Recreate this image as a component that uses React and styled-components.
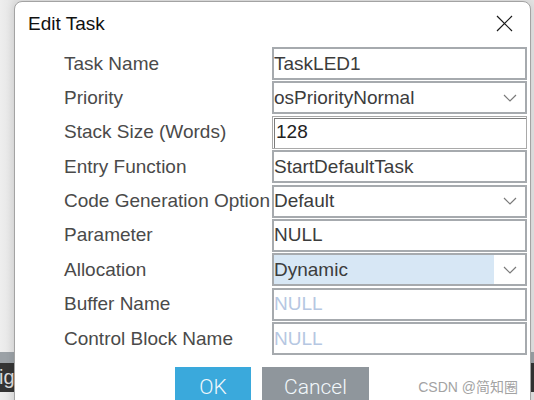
import React from 'react'
import styled, { createGlobalStyle } from 'styled-components'

const Global = createGlobalStyle`
  html, body {
    margin: 0;
    padding: 0;
    overflow: hidden;
    background: #e8e8e8;
  }
`

const Desktop = styled.div`
  position: relative;
  width: 534px;
  height: 400px;
  overflow: hidden;
  display: flex;
  flex-direction: column;
  background: linear-gradient(90deg, #eeeeee 0px, #e4e4e4 14px);
`

const Spacer = styled.div`
  height: 352px;
`

const GreyBand = styled.div`
  height: 11px;
  background: #9ba1a6;
`

const DarkBand = styled.div`
  height: 29px;
  background: #343434;
  color: #dcdcdc;
  font: 20px 'Liberation Sans', Arial, sans-serif;
  line-height: 29px;
  text-indent: -1px;
`

const Dialog = styled.div`
  position: absolute;
  left: 14px;
  top: 1px;
  width: 517px;
  height: 420px;
  box-sizing: border-box;
  background: #fff;
  border: 1px solid #a3a3a3;
  border-radius: 8px 8px 0 0;
  box-shadow: 0 0 10px rgba(0, 0, 0, 0.12);
  display: flex;
  flex-direction: column;
`

const TitleBar = styled.div`
  height: 43px;
  display: flex;
  align-items: center;
  justify-content: space-between;
  padding: 0 17px 0 13px;
`

const Title = styled.span`
  font: 19px 'Liberation Sans', Arial, sans-serif;
  color: #111;
`

const Close = styled.button`
  border: 0;
  background: none;
  padding: 0;
  width: 18px;
  height: 18px;
  display: flex;
  align-items: center;
  justify-content: center;
`

const Form = styled.div`
  display: grid;
  grid-template-columns: 208px 255px;
  grid-auto-rows: 34.4px;
  padding: 2px 0 0 49px;
`

const Label = styled.div`
  font: 19px 'Liberation Sans', Arial, sans-serif;
  color: #4a4a4a;
  display: flex;
  align-items: center;
  white-space: nowrap;
  height: 33px;
`

const Field = styled.div`
  height: 33px;
  box-sizing: border-box;
  border: ${p => (p.$focused ? '1px solid #a9a9a9' : '2px solid #a6aaae')};
  box-shadow: ${p => (p.$focused ? 'inset 1px 1px 0 #fff, inset 2px 2px 0 #7b7b7b' : 'none')};
  background: #fff;
  display: flex;
  align-items: center;
  font: 19px 'Liberation Sans', Arial, sans-serif;
  color: ${p => (p.$placeholder ? '#b6c7e2' : p.$focused ? '#222' : '#3c3c3c')};
  padding-left: ${p => (p.$focused ? '3px' : '0')};
  overflow: hidden;
  white-space: nowrap;
`

const Value = styled.span`
  flex: 1;
  align-self: stretch;
  display: flex;
  align-items: center;
  background: ${p => (p.$selected ? '#d7e7f5' : 'transparent')};
`

const ChevronCell = styled.span`
  width: 31px;
  align-self: stretch;
  display: flex;
  align-items: center;
  justify-content: center;
  background: #fff;
`

const Buttons = styled.div`
  display: flex;
  align-items: flex-start;
  gap: 11px;
  padding: 10px 12px 0 160px;
`

const Btn = styled.button`
  height: 40px;
  width: ${p => p.$w}px;
  border: 0;
  background: ${p => (p.$primary ? '#3aa9dc' : '#8f969c')};
  color: #f2f8fb;
  font: 300 21px Roboto, 'Liberation Sans', sans-serif;
  padding: 0;
  display: flex;
  align-items: center;
  justify-content: center;
`

const Watermark = styled.span`
  margin-left: auto;
  margin-top: 9px;
  font: 14px 'Liberation Sans', 'Noto Sans CJK SC', sans-serif;
  color: #a3a3a3;
`

const Chevron = () => (
  <svg width="14" height="8" viewBox="0 0 14 8">
    <path d="M1 1 L7 7 L13 1" fill="none" stroke="#7a7a7a" strokeWidth="1.2" />
  </svg>
)

const rows = [
  { label: 'Task Name', value: 'TaskLED1' },
  { label: 'Priority', value: 'osPriorityNormal', select: true },
  { label: 'Stack Size (Words)', value: '128', focused: true },
  { label: 'Entry Function', value: 'StartDefaultTask' },
  { label: 'Code Generation Option', value: 'Default', select: true },
  { label: 'Parameter', value: 'NULL' },
  { label: 'Allocation', value: 'Dynamic', select: true, selected: true },
  { label: 'Buffer Name', value: 'NULL', placeholder: true },
  { label: 'Control Block Name', value: 'NULL', placeholder: true },
]

export default function App() {
  return (
    <>
      <Global />
      <Desktop>
        <Spacer />
        <GreyBand />
        <DarkBand>ig</DarkBand>
        <Dialog>
          <TitleBar>
            <Title>Edit Task</Title>
            <Close>
              <svg width="17" height="17" viewBox="0 0 17 17">
                <path d="M1 1 L16 16 M16 1 L1 16" stroke="#1a1a1a" strokeWidth="1.2" />
              </svg>
            </Close>
          </TitleBar>
          <Form>
            {rows.map(r => (
              <React.Fragment key={r.label}>
                <Label>{r.label}</Label>
                <Field $focused={r.focused} $placeholder={r.placeholder}>
                  <Value $selected={r.selected}>{r.value}</Value>
                  {r.select && (
                    <ChevronCell>
                      <Chevron />
                    </ChevronCell>
                  )}
                </Field>
              </React.Fragment>
            ))}
          </Form>
          <Buttons>
            <Btn $primary $w={76}>OK</Btn>
            <Btn $w={107}>Cancel</Btn>
            <Watermark>CSDN @简知圈</Watermark>
          </Buttons>
        </Dialog>
      </Desktop>
    </>
  )
}
